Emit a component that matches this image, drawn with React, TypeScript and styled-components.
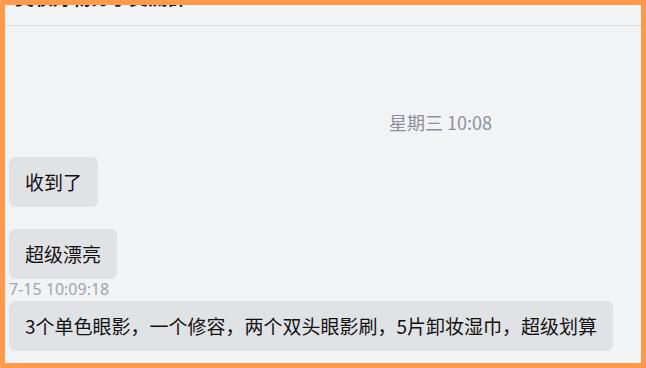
import React from "react";
import styled, { createGlobalStyle } from "styled-components";

const GlobalStyle = createGlobalStyle`
  html, body {
    margin: 0;
    padding: 0;
    background: #f2f3f5;
  }
  * {
    box-sizing: border-box;
  }
`;

const Frame = styled.div`
  width: 646px;
  height: 368px;
  border: 5px solid #fe9a4a;
  background: #f2f3f5;
  overflow: hidden;
  display: flex;
  flex-direction: column;
  font-family: "Noto Sans CJK SC", "Noto Sans", sans-serif;
`;

const Header = styled.div`
  height: 21px;
  flex-shrink: 0;
  border-bottom: 1px solid #dcdde1;
  overflow: hidden;
  display: flex;
  align-items: flex-start;
  gap: 14px;
  padding-left: 10px;
`;

const Title = styled.div`
  font-size: 19px;
  font-weight: 700;
  line-height: 24px;
  margin-top: -20px;
  color: #1b1b1b;
  white-space: nowrap;
`;

const HeaderIcon = styled.span`
  font-size: 14px;
  line-height: 20px;
  margin-top: -17px;
  color: #b4b6bb;
`;

const MessageList = styled.div`
  display: flex;
  flex-direction: column;
  align-items: flex-start;
  padding: 86px 4px 0;
`;

const DateLine = styled.div`
  align-self: stretch;
  padding-left: 380px;
  font-size: 18px;
  line-height: 20px;
  color: #8b909a;
  margin-bottom: 25px;
`;

const Bubble = styled.div<{ $gap?: number }>`
  margin-top: ${(p) => p.$gap ?? 0}px;
  background: #e1e2e6;
  border-radius: 6px;
  padding: 12px 16px;
  font-size: 19px;
  line-height: 26px;
  color: #111111;
  white-space: nowrap;
`;

const Stamp = styled.div`
  font-family: "Noto Sans", "Noto Sans CJK SC", sans-serif;
  font-size: 16px;
  line-height: 20px;
  color: #a3a4a8;
  margin-bottom: 2px;
`;

export default function App() {
  return (
    <>
      <GlobalStyle />
      <Frame>
        <Header>
          <Title>美妆好物分享交流群</Title>
          <HeaderIcon>✎</HeaderIcon>
        </Header>
        <MessageList>
          <DateLine>星期三 10:08</DateLine>
          <Bubble>收到了</Bubble>
          <Bubble $gap={22}>超级漂亮</Bubble>
          <Stamp>7-15 10:09:18</Stamp>
          <Bubble>3个单色眼影，一个修容，两个双头眼影刷，5片卸妆湿巾，超级划算</Bubble>
        </MessageList>
      </Frame>
    </>
  );
}
